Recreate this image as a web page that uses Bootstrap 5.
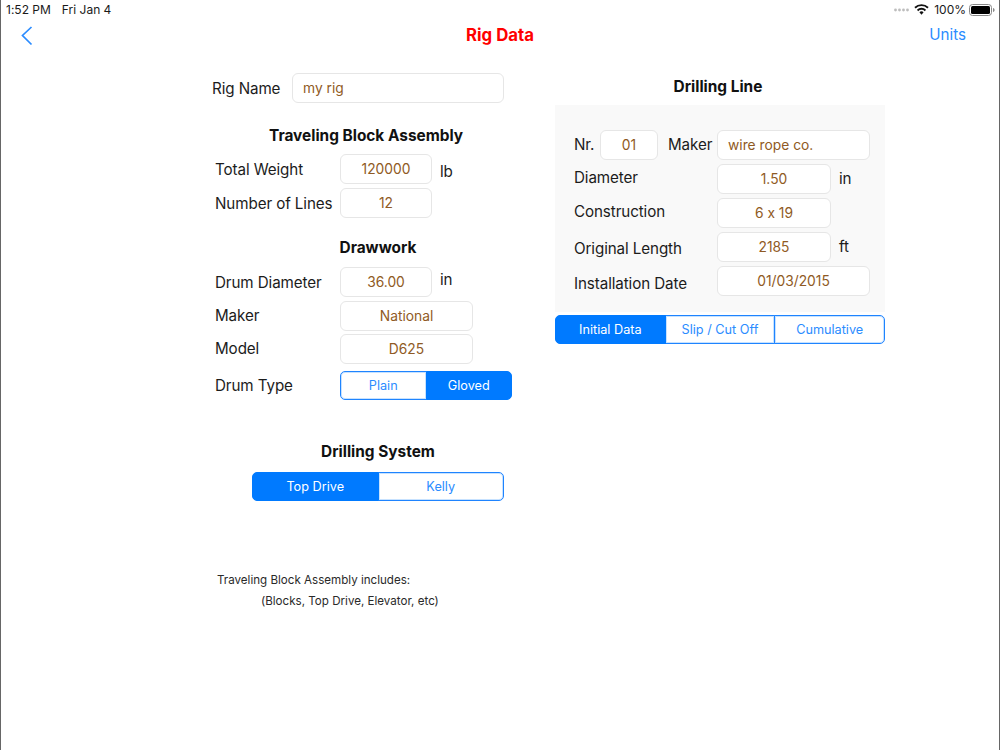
<!DOCTYPE html>
<html lang="en">
<head>
<meta charset="utf-8">
<title>Rig Data</title>
<link href="https://cdn.jsdelivr.net/npm/bootstrap@5.3.0/dist/css/bootstrap.min.css" rel="stylesheet">
<style>
html,body{margin:0;height:750px;overflow:hidden;background:#fff}
body{font-family:Inter,"Liberation Sans",sans-serif;color:#111;font-feature-settings:"calt" 0}
.screen{width:1000px;height:750px;border-left:1px solid #666;border-right:1px solid #666;overflow:hidden}
.status-row{height:19px;padding:0 0 0 5px;font-size:12px;line-height:19px;color:#1a1a1a}
.status-date{margin-left:11px}
.status-right{margin-left:auto;padding-right:4px}
.signal-dots{margin-right:5px}
.wifi{margin-right:5px}
.batt{margin-left:3px}
.top-row{height:33px;position:relative}
.back-link{margin:7px 0 0 19px;display:block;line-height:0}
.page-name{position:absolute;left:0;right:0;top:4px;text-align:center;color:#f00;font-weight:700;font-size:16.8px;line-height:24px;margin:0}
.units-link{margin-left:auto;margin-right:33px;color:#2b8cff;font-size:15.2px;text-decoration:none;line-height:32px}
.col-left{margin-left:211px;width:332px;flex:none}
.col-right{margin-left:11px;width:330px;flex:none}
.lbl{font-size:15.2px;line-height:32px;white-space:nowrap;color:#1c1c1c;letter-spacing:-.1px}
.field.form-control{height:30px;padding:0 10px 1px;font-size:13.8px;line-height:28px;color:#8f5a24;border:1px solid #e6e6e6;border-radius:6px;background:#fff;text-align:center;flex:none;font-family:inherit;font-feature-settings:"calt" 0}
.field.text-start{text-align:left}
.head{font-size:15.4px;font-weight:700;line-height:24px;margin:0;text-align:center;color:#111}
.rig-row{margin-top:21px;height:30px}
.rig-lbl{width:80px}
.w-rig{width:212px}
.h-block{margin-top:21px;padding-right:24px}
.h-draw{margin-top:18px}
.h-system{margin-top:38px}
.group-a{margin:6px 0 0 3px}
.group-b{margin:7px 0 0 3px}
.line{display:flex;height:30px;margin-bottom:4px}
.line-tight{margin-bottom:3px}
.line .lbl-a{width:125px}
.w-92{width:92px}
.w-133{width:133px}
.w-58{width:58px}
.w-114{width:114px}
.w-153{width:153px}
.unit-a{margin-left:8px}
.drop-half{padding-top:1px}
.drop1{padding-top:2px}
.drum-row{display:flex}
.drum-lbl{width:125px;padding-top:2px}
.rise1{margin-top:-1px}
.rise2{margin-top:-2px}
.rise3{margin-top:-3px}
.seg.btn-group>.btn.btn.btn{flex:1 1 0;height:29px;padding:0;font-size:12.7px;line-height:26px;border:1px solid #1f84ff;box-shadow:inset 0 0 0 1px rgba(0,122,255,.22);border-radius:0;color:#2b8cff;background:#fff;font-family:inherit;transition:none}
.seg.btn-group>.btn.btn.btn:first-child{border-radius:5px 0 0 5px}
.seg.btn-group>.btn.btn.btn:last-child{border-radius:0 5px 5px 0}
.seg.btn-group>.btn.btn.btn.active{background:#007aff;border-color:#007aff;color:#fff;box-shadow:none}
.seg-drum{width:172px;margin-top:3px}
.seg-sys{width:252px;margin:8px 0 0 40px;display:flex}
.note{font-size:11.6px;line-height:18px;color:#2a2a2a;margin:0;white-space:nowrap}
.note-a{margin:70px 0 0 5px}
.note-b{margin:3px 0 0 49px}
.h-line{margin-top:23px;padding-right:4px}
.panel{margin-top:6px;height:207px;background:#f9f9f9;padding:25px 15px 0 19px}
.nr-lbl{width:26px}
.maker-lbl{margin-left:10px;width:49px}
.line .lbl-b{width:143px}
.seg-line{margin-top:3px;display:flex;width:330px}
</style>
</head>
<body>
<div class="screen">
  <div class="status-row d-flex align-items-center">
    <span>1:52 PM</span><span class="status-date">Fri Jan 4</span>
    <div class="status-right d-flex align-items-center">
      <svg class="signal-dots" width="15" height="4" viewBox="0 0 15 4" aria-hidden="true"><g fill="#bdbdbd"><circle cx="1.500" cy="2" r="1.400"/><circle cx="5.500" cy="2" r="1.400"/><circle cx="9.500" cy="2" r="1.400"/><circle cx="13.500" cy="2" r="1.400"/></g></svg>
      <svg class="wifi" width="15" height="11" viewBox="0 0 16 12" aria-hidden="true"><path d="M8 11.600 5.700 9.100a3.300 3.300 0 0 1 4.600 0ZM4.400 7.800 3 6.200a7.200 7.200 0 0 1 10 0l-1.400 1.600a5.100 5.100 0 0 0-7.200 0ZM1.600 4.900 .2 3.400a11.200 11.200 0 0 1 15.600 0l-1.400 1.500a9.200 9.200 0 0 0-12.800 0Z" fill="#111"/></svg>
      <span>100%</span>
      <svg class="batt" width="26" height="12" viewBox="0 0 26 12" aria-hidden="true"><rect x=".5" y=".5" width="22" height="11" rx="3" fill="none" stroke="#888"/><rect x="2" y="2" width="19" height="8" rx="1.500" fill="#000"/><path d="M24 4v4c1-.3 1.600-1 1.600-2S25 4.300 24 4Z" fill="#888"/></svg>
    </div>
  </div>
  <div class="top-row d-flex align-items-start">
    <a class="back-link" href="#" aria-label="Back"><svg width="13" height="20" viewBox="0 0 13 20" aria-hidden="true"><path d="M11.500 1 2.500 9.500l9 9" fill="none" stroke="#2b8cff" stroke-width="1.700"/></svg></a>
    <h1 class="page-name">Rig Data</h1>
    <a class="units-link" href="#">Units</a>
  </div>
  <div class="d-flex">
    <div class="col-left">
      <div class="d-flex rig-row">
        <span class="lbl rig-lbl">Rig Name</span>
        <input class="form-control field text-start w-rig" value="my rig">
      </div>
      <h2 class="head h-block">Traveling Block Assembly</h2>
      <div class="group-a">
        <div class="line"><span class="lbl lbl-a">Total Weight</span><input class="form-control field w-92" value="120000"><span class="lbl unit-a drop1">lb</span></div>
        <div class="line"><span class="lbl lbl-a">Number of Lines</span><input class="form-control field w-92" value="12"></div>
      </div>
      <h2 class="head h-draw">Drawwork</h2>
      <div class="group-b">
        <div class="line"><span class="lbl lbl-a">Drum Diameter</span><input class="form-control field w-92" value="36.00"><span class="lbl unit-a rise3">in</span></div>
        <div class="line line-tight"><span class="lbl lbl-a rise1">Maker</span><input class="form-control field w-133" value="National"></div>
        <div class="line"><span class="lbl lbl-a rise1">Model</span><input class="form-control field w-133" value="D625"></div>
        <div class="drum-row">
          <span class="lbl drum-lbl">Drum Type</span>
          <div class="btn-group seg seg-drum" role="group"><button type="button" class="btn">Plain</button><button type="button" class="btn active">Gloved</button></div>
        </div>
      </div>
      <h2 class="head h-system">Drilling System</h2>
      <div class="btn-group seg seg-sys" role="group"><button type="button" class="btn active">Top Drive</button><button type="button" class="btn">Kelly</button></div>
      <p class="note note-a">Traveling Block Assembly includes:</p>
      <p class="note note-b">(Blocks, Top Drive, Elevator, etc)</p>
    </div>
    <div class="col-right">
      <h2 class="head h-line">Drilling Line</h2>
      <div class="panel">
        <div class="line"><span class="lbl nr-lbl rise1">Nr.</span><input class="form-control field w-58" value="01"><span class="lbl maker-lbl rise1">Maker</span><input class="form-control field text-start w-153" value="wire rope co."></div>
        <div class="line"><span class="lbl lbl-b rise2">Diameter</span><input class="form-control field w-114" value="1.50"><span class="lbl unit-a rise1">in</span></div>
        <div class="line"><span class="lbl lbl-b rise2">Construction</span><input class="form-control field w-114" value="6 x 19"></div>
        <div class="line"><span class="lbl lbl-b drop-half">Original Length</span><input class="form-control field w-114" value="2185"><span class="lbl unit-a rise1">ft</span></div>
        <div class="line"><span class="lbl lbl-b drop1">Installation Date</span><input class="form-control field w-153" value="01/03/2015"></div>
      </div>
      <div class="btn-group seg seg-line" role="group"><button type="button" class="btn active">Initial Data</button><button type="button" class="btn">Slip / Cut Off</button><button type="button" class="btn">Cumulative</button></div>
    </div>
  </div>
</div>
<script src="https://cdn.jsdelivr.net/npm/bootstrap@5.3.0/dist/js/bootstrap.bundle.min.js"></script>
</body>
</html>
